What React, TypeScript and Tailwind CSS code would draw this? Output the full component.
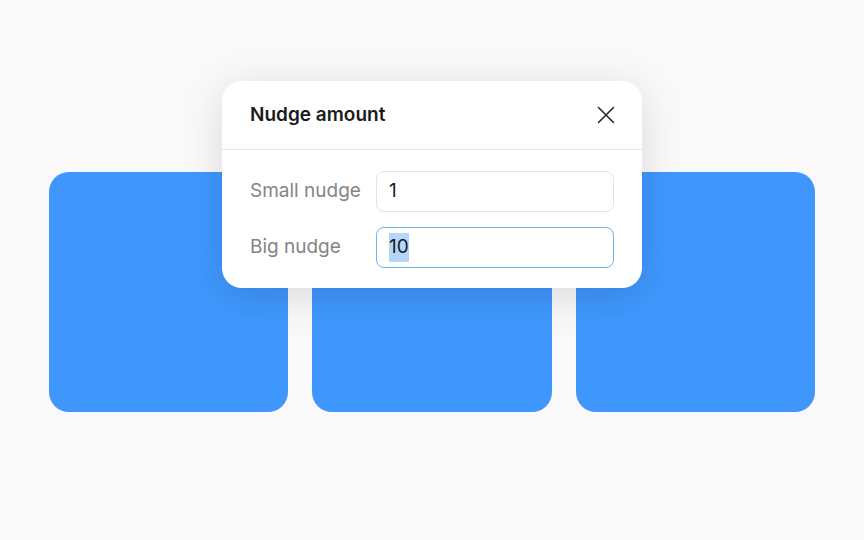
import React from "react";

export default function App() {
  return (
    <div className="relative w-[864px] h-[540px] bg-[#f9f9f9] overflow-hidden" style={{ fontFamily: "Inter, 'Noto Sans', sans-serif" }}>
      <div className="flex gap-[24px] pl-[49px] pt-[172px]">
        <div className="w-[239px] h-[240px] rounded-[20px] bg-[#3f97fd]" />
        <div className="w-[240px] h-[240px] rounded-[20px] bg-[#3f97fd]" />
        <div className="w-[239px] h-[240px] rounded-[20px] bg-[#3f97fd]" />
      </div>
      <div className="absolute left-[222px] top-[81px] w-[420px] h-[207px] rounded-[20px] bg-white shadow-[0_8px_40px_rgba(0,0,0,0.13)] flex flex-col">
        <div className="h-[69px] flex items-center justify-between pl-[28px] pr-[26px] border-b border-[#e6e6e6]">
          <span className="text-[19px] font-semibold text-[#1a1a1a]">Nudge amount</span>
          <svg width="20" height="20" viewBox="0 0 20 20" fill="none" stroke="#2a2a2a" strokeWidth="1.6" strokeLinecap="round">
            <path d="M2.5 2.5 L17.5 17.5 M17.5 2.5 L2.5 17.5" />
          </svg>
        </div>
        <div className="flex flex-col gap-[15px] pt-[21px] px-[28px]">
          <div className="flex items-center">
            <span className="w-[126px] text-[19px] text-[#858585]">Small nudge</span>
            <div className="flex-1 h-[41px] rounded-[8px] border border-[#e3e3e3] flex items-center px-[12px] text-[19px] text-[#1a1a1a]">1</div>
          </div>
          <div className="flex items-center">
            <span className="w-[126px] text-[19px] text-[#858585]">Big nudge</span>
            <div className="flex-1 h-[41px] rounded-[8px] border-[1.5px] border-[#6ab2f5] flex items-center px-[12px] text-[19px] text-[#1a1a1a]">
              <span className="bg-[#b4d6fb]">10</span>
            </div>
          </div>
        </div>
      </div>
    </div>
  );
}
